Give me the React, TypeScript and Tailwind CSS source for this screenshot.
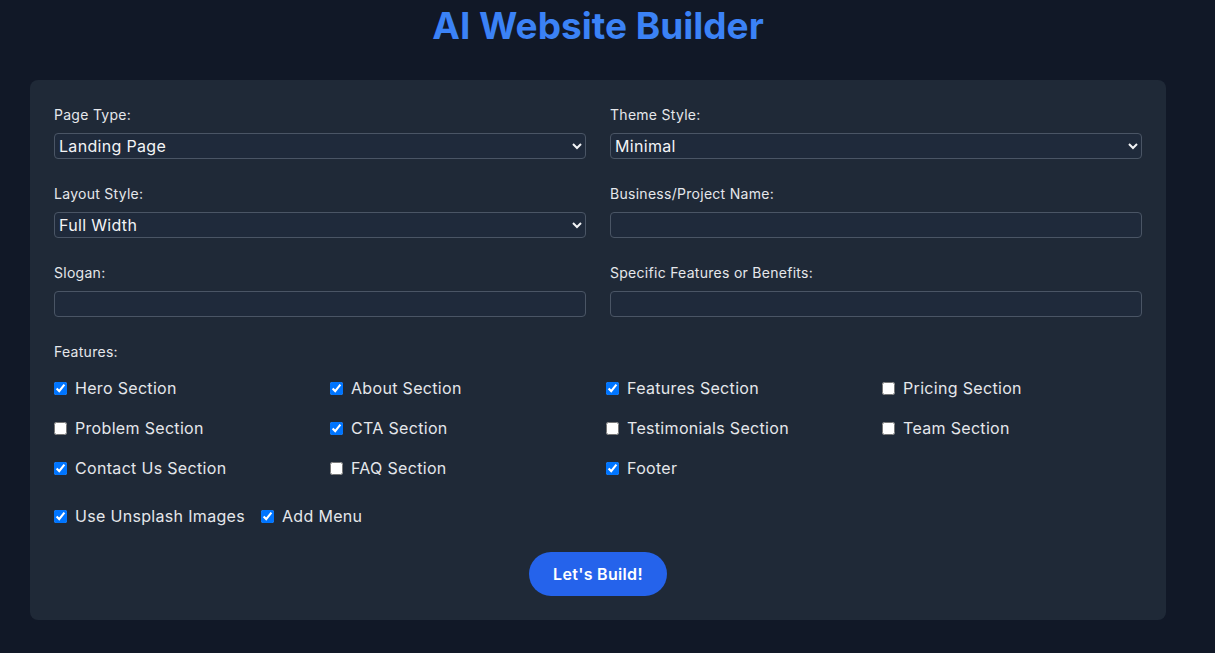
import { useState } from "react";

const FEATURES: { label: string; checked: boolean }[] = [
  { label: "Hero Section", checked: true },
  { label: "About Section", checked: true },
  { label: "Features Section", checked: true },
  { label: "Pricing Section", checked: false },
  { label: "Problem Section", checked: false },
  { label: "CTA Section", checked: true },
  { label: "Testimonials Section", checked: false },
  { label: "Team Section", checked: false },
  { label: "Contact Us Section", checked: true },
  { label: "FAQ Section", checked: false },
  { label: "Footer", checked: true },
];

const field =
  "block h-[26px] w-full rounded border border-gray-600 bg-[#1f2a3b] text-base leading-6 tracking-[0.02em] text-gray-100 outline-none";
const label = "mb-2 block text-sm leading-[21px] tracking-[0.02em] text-gray-200";

function Check({ text, defaultChecked }: { text: string; defaultChecked: boolean }) {
  const [on, setOn] = useState(defaultChecked);
  return (
    <label className="flex items-center text-base leading-6 tracking-[0.02em] text-gray-200">
      <input
        type="checkbox"
        checked={on}
        onChange={() => setOn(!on)}
        className="mr-2 h-[13px] w-[13px]"
        style={{ colorScheme: "light" }}
      />
      {text}
    </label>
  );
}

export default function App() {
  return (
    <div
      className="min-h-screen bg-[#111827] pt-[6px]"
      style={{ fontFamily: "Inter, 'Liberation Sans', sans-serif" }}
    >
      <div className="ml-[30px] w-[1136px]">
        <h1 className="mb-[34px] text-center text-[37px] font-bold leading-10 text-[#3b82f6]">
          AI Website Builder
        </h1>

        <form onSubmit={(e) => e.preventDefault()} className="rounded-lg bg-[#1f2937] p-6">
          <div className="grid grid-cols-2 gap-x-6 gap-y-6">
            <div>
              <span className={label}>Page Type:</span>
              <select className={field} style={{ colorScheme: "dark" }} defaultValue="Landing Page">
                <option>Landing Page</option>
                <option>Portfolio</option>
                <option>Blog</option>
              </select>
            </div>
            <div>
              <span className={label}>Theme Style:</span>
              <select className={field} style={{ colorScheme: "dark" }} defaultValue="Minimal">
                <option>Minimal</option>
                <option>Modern</option>
                <option>Classic</option>
              </select>
            </div>
            <div>
              <span className={label}>Layout Style:</span>
              <select className={field} style={{ colorScheme: "dark" }} defaultValue="Full Width">
                <option>Full Width</option>
                <option>Boxed</option>
              </select>
            </div>
            <div>
              <span className={label}>Business/Project Name:</span>
              <input className={`${field} px-1`} />
            </div>
            <div>
              <span className={label}>Slogan:</span>
              <input className={`${field} px-1`} />
            </div>
            <div>
              <span className={label}>Specific Features or Benefits:</span>
              <input className={`${field} px-1`} />
            </div>
          </div>

          <span className="mt-6 mb-[14px] block text-sm leading-[21px] tracking-[0.02em] text-gray-200">
            Features:
          </span>
          <div className="grid grid-cols-4 gap-4">
            {FEATURES.map((f) => (
              <Check key={f.label} text={f.label} defaultChecked={f.checked} />
            ))}
          </div>

          <div className="mt-6 flex gap-4">
            <Check text="Use Unsplash Images" defaultChecked />
            <Check text="Add Menu" defaultChecked />
          </div>

          <div className="mt-6 flex justify-center">
            <button
              type="submit"
              className="h-11 rounded-full bg-[#2563eb] px-6 text-base font-semibold tracking-[0.02em] text-white hover:bg-[#1d4ed8]"
            >
              Let's Build!
            </button>
          </div>
        </form>
      </div>
    </div>
  );
}
